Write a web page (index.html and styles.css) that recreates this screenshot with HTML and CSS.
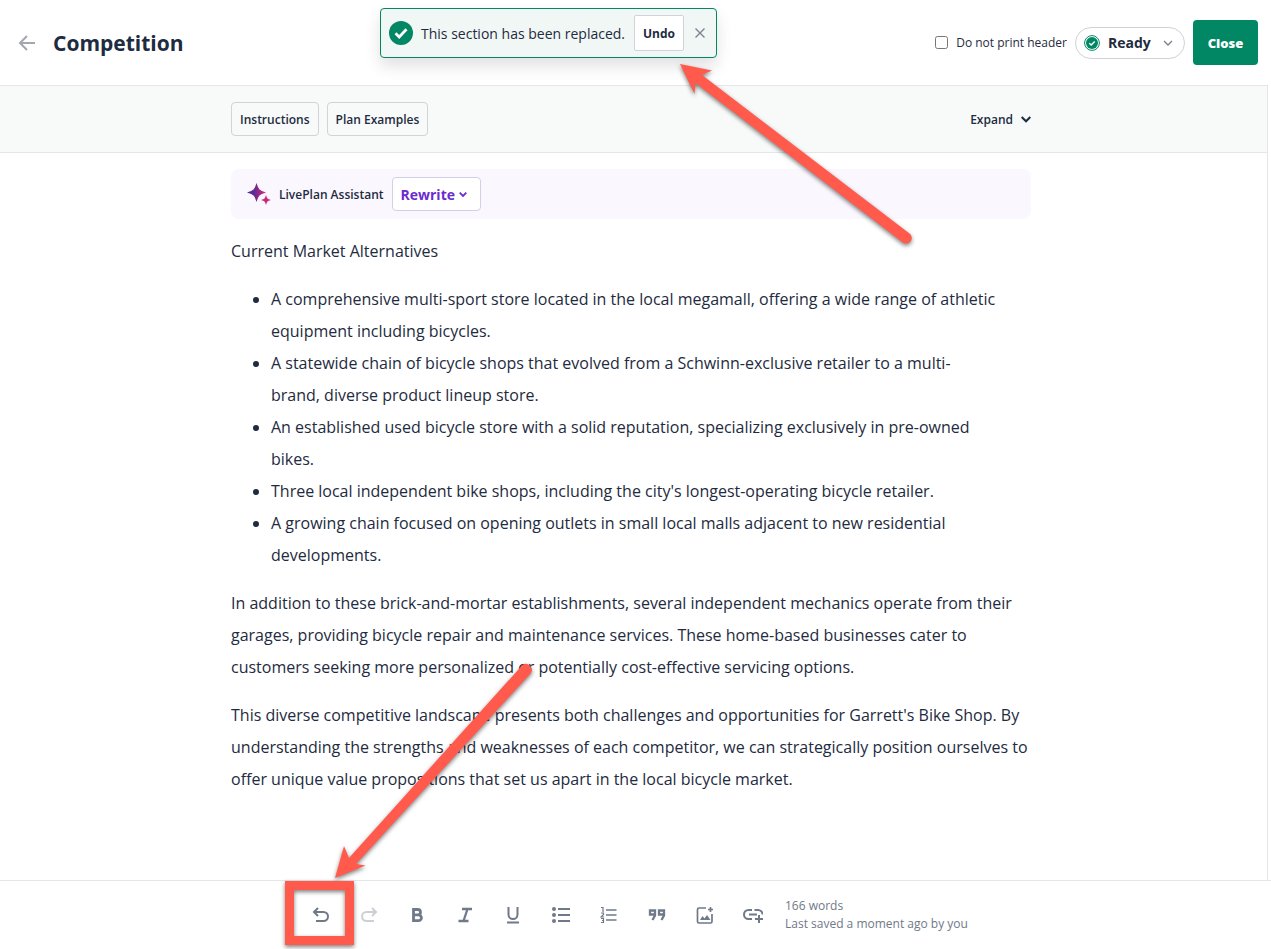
FILE: index.html
```html
<!DOCTYPE html>
<html lang="en">
<head>
  <meta charset="UTF-8" />
  <meta name="viewport" content="width=device-width, initial-scale=1.0" />
  <title>Competition</title>
  <link rel="stylesheet" href="styles.css">
</head>
<body>
  <header class="topbar">
    <a class="back" href="#" aria-label="Back">
      <svg width="18" height="18" viewBox="0 0 18 18" fill="none" stroke="#a3a7b0" stroke-width="2"><path d="M17 9H2M9 2L2 9l7 7" /></svg>
    </a>
    <h1>Competition</h1>
    <label class="print-option"><input type="checkbox" /> Do not print header</label>
    <button class="status">
      <svg width="16" height="16" viewBox="0 0 16 16"><circle cx="8" cy="8" r="7.4" fill="#fff" stroke="#028764" /><circle cx="8" cy="8" r="6" fill="#028764" /><path d="M5.3 8.2l1.9 1.8 3.5-3.6" fill="none" stroke="#fff" stroke-width="1.5" /></svg>
      <span>Ready</span>
      <svg width="10" height="6" viewBox="0 0 10 6" fill="none" stroke="#777f8d" stroke-width="1.3"><path d="M1 1l4 4 4-4" /></svg>
    </button>
    <button class="close">Close</button>
  </header>

  <div class="toast" role="status">
    <svg width="24" height="24" viewBox="0 0 24 24"><circle cx="12" cy="12" r="12" fill="#028764" /><path d="M6.5 12.3l3.7 3.6 7.3-7.6" fill="none" stroke="#fff" stroke-width="2.8" /></svg>
    <span>This section has been replaced.</span>
    <button class="btn undo">Undo</button>
    <button class="dismiss" aria-label="Dismiss">
      <svg width="10" height="10" viewBox="0 0 10 10" stroke="#7b8290" stroke-width="1.4"><path d="M.5.5l9 9M9.5.5l-9 9" /></svg>
    </button>
  </div>

  <main class="workspace">
    <div class="helpbar">
      <div class="column">
        <button class="btn">Instructions</button>
        <button class="btn">Plan Examples</button>
        <button class="expand">Expand
          <svg width="10" height="7" viewBox="0 0 10 7" fill="none" stroke="#1e2b40" stroke-width="2"><path d="M.7 1L5 5.3 9.3 1" /></svg>
        </button>
      </div>
    </div>

    <div class="editor">
      <div class="assistant">
        <svg width="24" height="24" viewBox="0 0 24 24">
          <defs>
            <linearGradient id="spark" x1="0" y1="0" x2="24" y2="0" gradientUnits="userSpaceOnUse"><stop offset="0" stop-color="#4b2a9b" /><stop offset=".3" stop-color="#5f2a94" /><stop offset=".65" stop-color="#c2257f" /><stop offset="1" stop-color="#e0246f" /></linearGradient>
          </defs>
          <path fill="url(#spark)" d="M9.5 1Q11 6 12.500 7.500Q14 9 19 10.500Q14 12 12.500 13.500Q11 15 9.500 20Q8 15 6.500 13.500Q5 12 0 10.500Q5 9 6.500 7.500Q8 6 9.500 1ZM19 13Q19.700 15.700 20.500 16.500Q21.300 17.300 24 18Q21.300 18.700 20.500 19.500Q19.700 20.300 19 23Q18.300 20.300 17.500 19.500Q16.700 18.700 14 18Q16.700 17.300 17.500 16.500Q18.300 15.700 19 13Z" />
        </svg>
        <span>LivePlan Assistant</span>
        <button class="rewrite">Rewrite
          <svg width="8" height="5" viewBox="0 0 8 5" fill="none" stroke="#6a2bd0" stroke-width="1.8"><path d="M.7.7L4 4 7.3.7" /></svg>
        </button>
      </div>

      <article class="document">
        <p>Current Market Alternatives</p>
        <ul>
          <li>A comprehensive multi-sport store located in the local megamall, offering a wide range of athletic equipment including bicycles.</li>
          <li>A statewide chain of bicycle shops that evolved from a Schwinn-exclusive retailer to a multi-brand, diverse product lineup store.</li>
          <li>An established used bicycle store with a solid reputation, specializing exclusively in pre-owned bikes.</li>
          <li>Three local independent bike shops, including the city's longest-operating bicycle retailer.</li>
          <li>A growing chain focused on opening outlets in small local malls adjacent to new residential developments.</li>
        </ul>
        <p>In addition to these brick-and-mortar establishments, several independent mechanics operate from their garages, providing bicycle repair and maintenance services. These home-based businesses cater to customers seeking more personalized or potentially cost-effective servicing options.</p>
        <p>This diverse competitive landscape presents both challenges and opportunities for Garrett's Bike Shop. By understanding the strengths and weaknesses of each competitor, we can strategically position ourselves to offer unique value propositions that set us apart in the local bicycle market.</p>
      </article>
    </div>
  </main>

  <footer class="toolbar">
    <button aria-label="Undo"><svg viewBox="0 0 18 18"><path d="M6 2L2 6l4 4M2 6h9.5a4.500 4.500 0 0 1 0 9H4" /></svg></button>
    <button aria-label="Redo" disabled><svg viewBox="0 0 18 18"><path d="M12 2l4 4-4 4M16 6H6.500a4.500 4.500 0 0 0 0 9H14" /></svg></button>
    <button aria-label="Bold"><svg viewBox="0 0 18 18"><path stroke-width="2.8" d="M5.500 3.500h4.300a2.600 2.600 0 0 1 0 5.300H5.500zM5.500 8.800h5a2.900 2.900 0 0 1 0 5.800h-5z" /></svg></button>
    <button aria-label="Italic"><svg viewBox="0 0 18 18"><path stroke-width="2.3" d="M6 3h10M2.500 15h10M11.500 3l-4 12" /></svg></button>
    <button aria-label="Underline"><svg viewBox="0 0 18 18"><path d="M4.500 1v7.500a4.500 4.500 0 0 0 9 0V1M3 16.500h12" /></svg></button>
    <button aria-label="Bullet list"><svg viewBox="0 0 18 18"><path d="M6 3h12M6 9h12M6 15h12" /><g fill="#6f7989" stroke="none"><circle cx="2" cy="3" r="2" /><circle cx="2" cy="9" r="2" /><circle cx="2" cy="15" r="2" /></g></svg></button>
    <button aria-label="Numbered list"><svg viewBox="0 0 18 18"><path stroke-width="1.6" d="M6 4h10.500M6 9h10.500M6 14h10.500" /><path stroke-width="1.2" d="M1 1.500h2V6M1 7h2.500v1.500L1 11h3M1 12.500h2.500v4H1M2 14.500h1.500" /></svg></button>
    <button aria-label="Quote"><svg viewBox="0 0 18 18"><path stroke-width="2.3" d="M7 8.500H2v-4h5v5L4.500 14M16 8.500h-5v-4h5v5L13.500 14" /></svg></button>
    <button aria-label="Insert image"><svg viewBox="0 0 18 18"><path stroke-width="1.7" d="M10 2H3a1.500 1.500 0 0 0-1.500 1.500v12A1.500 1.500 0 0 0 3 17h11.500a1.500 1.500 0 0 0 1.500-1.500V8M14.500 1v5M12 3.500h5" /><path fill="#6f7989" stroke="none" d="M4 14l2.500-4 2 2.500L11 9l3.500 5z" /></svg></button>
    <button aria-label="Insert link"><svg class="wide" viewBox="0 0 20 18"><path d="M9 13H5.500a4.500 4.500 0 0 1 0-9H9M11.500 4H15a4.500 4.500 0 0 1 4.500 4.500M6 8.500h8M16 9v8M12 13h8" /></svg></button>
    <div class="save-info">166 words<br />Last saved a moment ago by you</div>
  </footer>

  <!-- callouts drawn over the page -->
  <svg class="callouts" width="1271" height="949" viewBox="0 0 1271 949" aria-hidden="true">
    <g fill="#ff5a4c" stroke="none">
      <path d="M680 64L712 70.500L702 75L909.500 233.500A5.500 5.500 0 0 1 902.800 242.500L695.500 83L694.500 94Z" />
      <path d="M335 878L344 846L349 858L522.500 665A6 6 0 0 1 531 673L356 864L365.500 865.500Z" />
      <path fill-rule="evenodd" d="M285 881h69v64h-69zM294 890v46h51v-46z" />
    </g>
  </svg>
</body>
</html>
```

FILE: styles.css
```css
* {
  box-sizing: border-box;
}
body {
  font-family: "Open Sans", "Noto Sans", sans-serif;
  margin: 0;
  height: 100vh;
  display: flex;
  flex-direction: column;
  position: relative;
  overflow: hidden;
  color: #1e2b40;
  background: #fff;
}
button {
  font-family: inherit;
  color: inherit;
  cursor: pointer;
}
svg {
  flex: none;
}

/* Header */
.topbar {
  display: flex;
  align-items: center;
  height: 85px;
  padding: 0 13px 0 18px;
  flex: none;
}
.back {
  display: flex;
}
h1 {
  font-size: 21px;
  line-height: 32px;
  margin: 0 auto 0 17px;
}
.print-option {
  display: flex;
  align-items: center;
  gap: 8px;
  font-size: 12px;
}
.print-option input {
  width: 13px;
  height: 13px;
  margin: 0;
}
.status {
  display: flex;
  align-items: center;
  width: 110px;
  height: 32px;
  margin: 0 8px;
  padding: 0 11px 0 8px;
  border: 1px solid #d0d2d6;
  border-radius: 16px;
  background: #fff;
  font-size: 14px;
  font-weight: 700;
}
.status span {
  margin: 0 auto 0 8px;
}
.close {
  width: 65px;
  height: 45px;
  padding: 0;
  border: 0;
  border-radius: 4px;
  background: #028764;
  color: #fff;
  font-size: 13px;
  font-weight: 800;
}

/* Toast */
.toast {
  position: absolute;
  left: 380px;
  top: 8px;
  display: flex;
  align-items: center;
  width: 337px;
  height: 50px;
  padding: 0 11px 0 8px;
  border: 1px solid #028764;
  border-radius: 4px;
  background: #f1f7f5;
  box-shadow: 0 8px 16px rgba(0, 0, 0, 0.12);
  font-size: 14px;
  white-space: nowrap;
}
.toast span {
  margin: 0 auto 0 8px;
}
.btn {
  height: 34px;
  padding: 0 8px;
  border: 1px solid #d0d3d7;
  border-radius: 4px;
  background: transparent;
  font-size: 12px;
  font-weight: 600;
}
.undo {
  width: 50px;
  height: 36px;
  padding: 0;
  border-radius: 2px;
  background: #fff;
  font-weight: 700;
}
.dismiss {
  display: flex;
  margin-left: 11px;
  padding: 0;
  border: 0;
  background: none;
}

/* Workspace */
.workspace {
  flex: 1;
  min-height: 0;
  margin-right: 3px;
  border-top: 1px solid #e4e7e7;
  border-right: 1px solid #e4e7e7;
}
.helpbar {
  padding: 16px 5px 16px 0;
  border-bottom: 1px solid #e4e7e7;
  background: #f7faf9;
}
.column, .editor {
  width: 800px;
  max-width: 100%;
  margin: 0 auto;
}
.column {
  display: flex;
  align-items: center;
  gap: 8px;
}
.expand {
  display: flex;
  align-items: center;
  gap: 8px;
  margin-left: auto;
  padding: 0;
  border: 0;
  background: none;
  font-size: 12px;
  font-weight: 600;
}
.editor {
  width: 805px;
  padding: 16px 5px 0 0;
}
.assistant {
  display: flex;
  align-items: center;
  gap: 8px;
  height: 50px;
  padding: 0 16px;
  border-radius: 8px;
  background: #faf7ff;
  font-size: 12px;
  font-weight: 600;
}
.rewrite {
  display: flex;
  align-items: center;
  gap: 4px;
  width: 89px;
  height: 34px;
  padding: 0 8px;
  border: 1px solid #d4cfe6;
  border-radius: 4px;
  background: #fff;
  color: #6a2bd0;
  font-size: 14px;
  font-weight: 700;
}
.document {
  font-size: 16px;
  line-height: 32px;
}
.document p, .document ul {
  margin: 16px 0;
}
.document ul {
  padding: 0 32px 0 40px;
}

/* Formatting bar */
.toolbar {
  display: flex;
  flex: none;
  align-items: center;
  justify-content: center;
  height: 69px;
  border-top: 1px solid #e4e7e7;
}
.toolbar button {
  display: flex;
  align-items: center;
  justify-content: center;
  width: 48px;
  height: 48px;
  padding: 0;
  border: 0;
  background: none;
}
.toolbar svg {
  width: 18px;
  height: 18px;
  fill: none;
  stroke: #6f7989;
  stroke-width: 2;
}
.toolbar svg.wide {
  width: 20px;
}
.toolbar button:disabled {
  opacity: 0.35;
}
.save-info {
  width: 197px;
  padding-left: 8px;
  color: #6f7989;
  font-size: 12px;
  line-height: 18px;
  white-space: nowrap;
}
.callouts {
  position: absolute;
  left: 0;
  top: 0;
  pointer-events: none;
  filter: drop-shadow(0 2px 2px rgba(0, 0, 0, 0.5));
}
```
